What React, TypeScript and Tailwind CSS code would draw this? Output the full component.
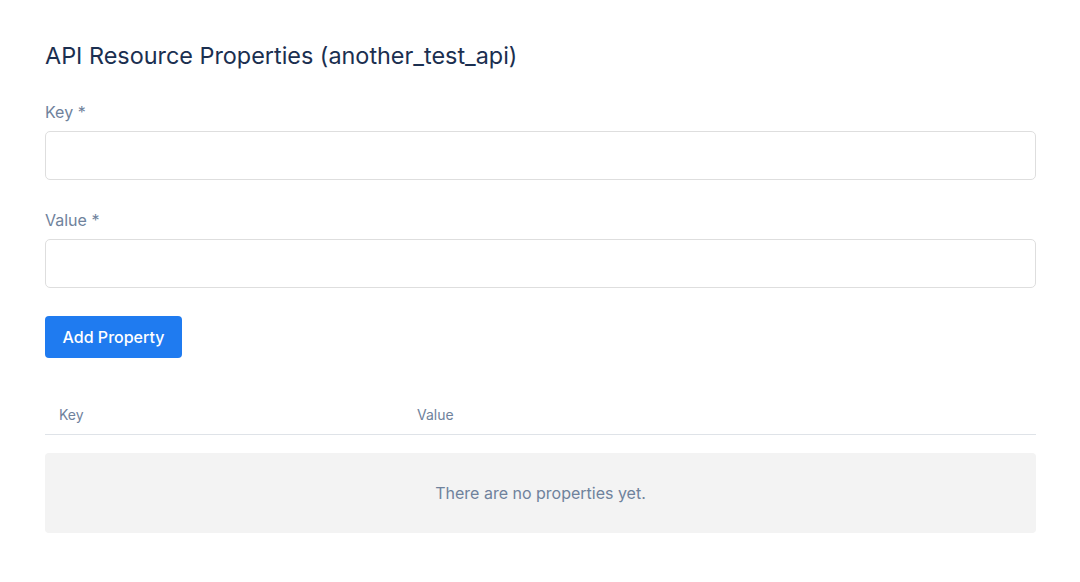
import React from "react";

export default function App() {
  return (
    <div className="min-h-[582px] bg-white pl-[45px] pr-[44px] pt-[40px]" style={{ fontFamily: "Inter, 'Noto Sans', sans-serif" }}>
      <h1 className="text-[23.4px] leading-[32px] font-normal text-[#1b2f50]">API Resource Properties (another_test_api)</h1>
      <div className="mt-[30px]">
        <label className="block text-[16px] leading-[20px] text-[#6f829c]">Key *</label>
        <input className="mt-[9px] block h-[49px] w-full rounded-[5px] border border-[#dedede] bg-white px-3 outline-none" />
      </div>
      <div className="mt-[30px]">
        <label className="block text-[16px] leading-[20px] text-[#6f829c]">Value *</label>
        <input className="mt-[9px] block h-[49px] w-full rounded-[5px] border border-[#dedede] bg-white px-3 outline-none" />
      </div>
      <button className="mt-[28px] h-[42px] w-[137px] rounded-[4px] bg-[#1f7bf0] text-[16px] font-medium text-white">Add Property</button>
      <div className="mt-[36px]">
        <div className="flex h-[41px] items-center border-b border-[#dfe3e8] text-[14px] text-[#6f829c]">
          <div className="w-[358px] pl-[14px]">Key</div>
          <div className="pl-[14px]">Value</div>
        </div>
        <div className="mt-[18px] flex h-[80px] items-center justify-center rounded-[4px] bg-[#f3f3f3] text-[16px] text-[#6f829c]">
          There are no properties yet.
        </div>
      </div>
    </div>
  );
}
